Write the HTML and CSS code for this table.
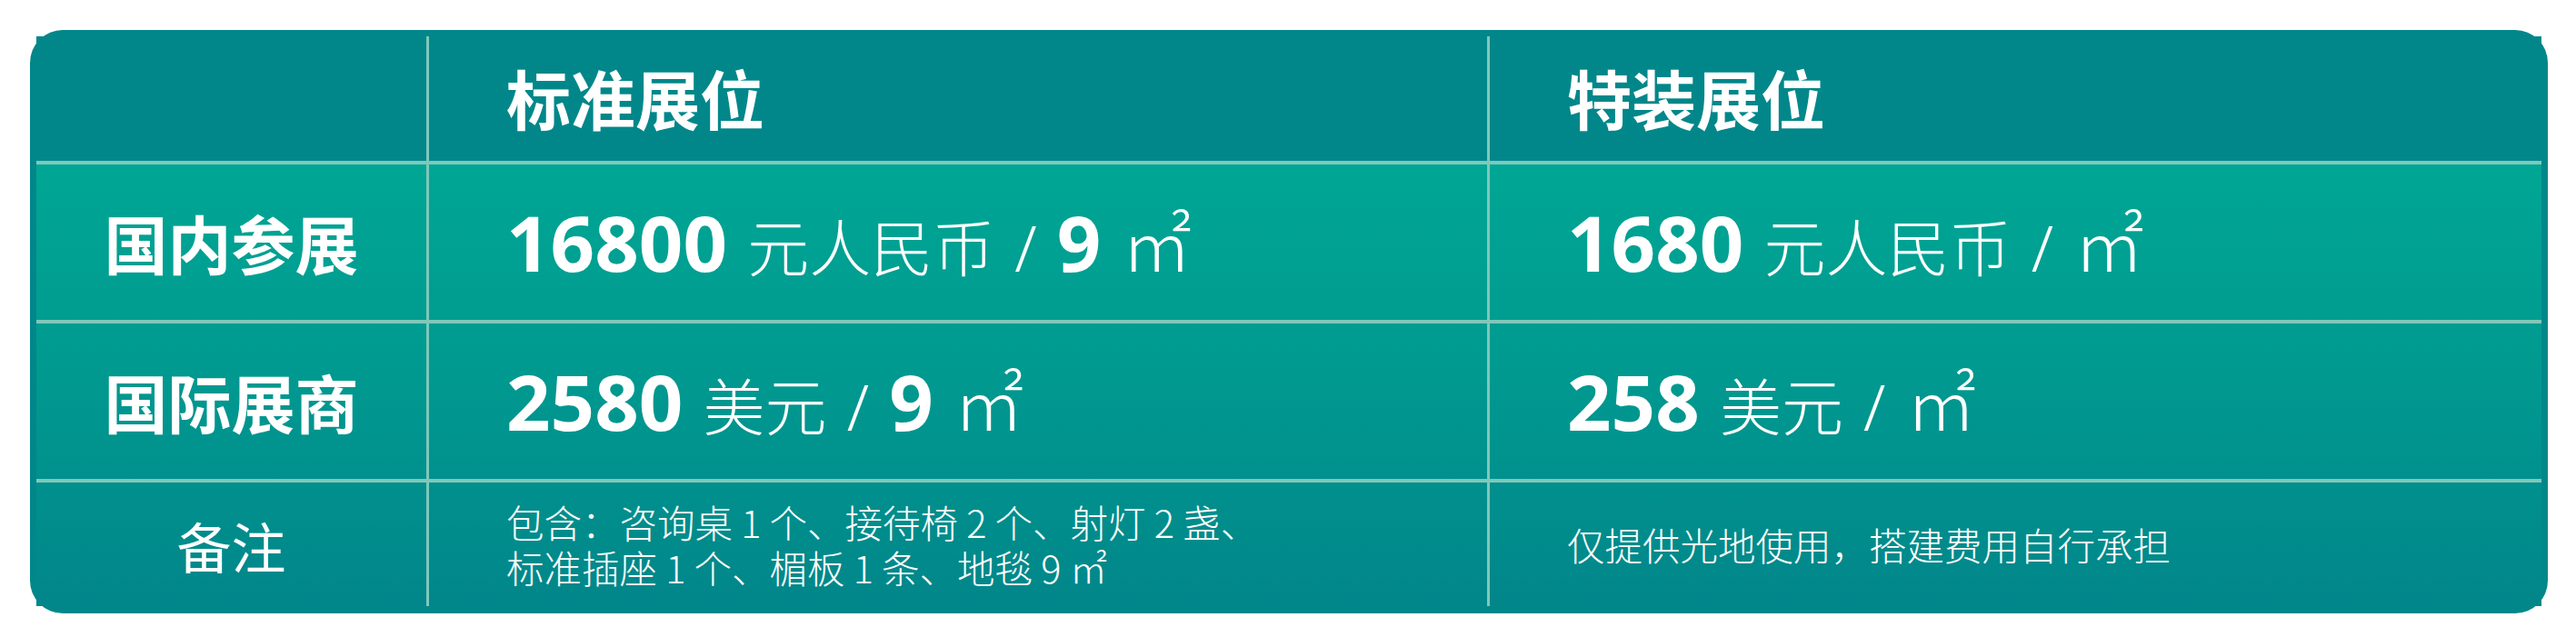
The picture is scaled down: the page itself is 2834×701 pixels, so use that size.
FILE: index.html
```html
<!DOCTYPE html>
<html lang="zh-CN">
<head>
<meta charset="utf-8">
<title>展位价格</title>
<link rel="stylesheet" href="styles.css">
</head>
<body>
<div class="card">
  <div class="table">
    <div class="cell head first"></div>
    <div class="cell head col">标准展位</div>
    <div class="cell head col">特装展位</div>

    <div class="cell label row">国内参展</div>
    <div class="cell price row col"><p class="val"><span class="num">16800</span> <span class="unit">元人民币</span> <span class="slash">/</span> <span class="num">9</span> <span class="sq">㎡</span></p></div>
    <div class="cell price row col"><p class="val"><span class="num">1680</span> <span class="unit">元人民币</span> <span class="slash">/</span> <span class="sq">㎡</span></p></div>

    <div class="cell label row">国际展商</div>
    <div class="cell price row col"><p class="val"><span class="num">2580</span> <span class="unit">美元</span> <span class="slash">/</span> <span class="num">9</span> <span class="sq">㎡</span></p></div>
    <div class="cell price row col"><p class="val"><span class="num">258</span> <span class="unit">美元</span> <span class="slash">/</span> <span class="sq">㎡</span></p></div>

    <div class="cell note-label row">备注</div>
    <div class="cell note row col"><p class="val">包含：咨询桌 1 个、接待椅 2 个、射灯 2 盏、<br>标准插座 1 个、楣板 1 条、地毯 9 ㎡</p></div>
    <div class="cell note row col"><p class="val">仅提供光地使用，搭建费用自行承担</p></div>
  </div>
</div>
</body>
</html>
```

FILE: styles.css
```css
html, body {
  margin: 0;
  padding: 0;
  background: #ffffff;
}

body {
  font-family: "Noto Sans", "Noto Sans CJK SC", sans-serif;
  color: #ffffff;
}

.card {
  box-sizing: border-box;
  margin: 33px 0 0 33px;
  width: 2770px;
  height: 642px;
  padding: 7px 7px 8px 7px;
  border-radius: 36px;
  background: #01878a;
}

.table {
  display: grid;
  grid-template-columns: 429px 1167px 1160px;
  grid-template-rows: 137px 175px 175px 140px;
  background: linear-gradient(to bottom, #01878a 0, #01878a 137px, #00a694 141px, #009a90 360px, #01868a 100%);
}

.cell {
  box-sizing: border-box;
  display: flex;
  align-items: center;
  white-space: nowrap;
}

.val {
  margin: 0;
}

.col {
  border-left: 3px solid #7fc8bb;
  padding-left: 85px;
}

.row {
  border-top: 4px solid #7fc8bb;
}

.head {
  font-family: "Noto Sans CJK SC", sans-serif;
  font-weight: 700;
  font-size: 71px;
  padding-bottom: 6px;
}

.label {
  justify-content: center;
  font-family: "Noto Sans CJK SC", sans-serif;
  font-weight: 700;
  font-size: 70px;
}

.note-label {
  justify-content: center;
  font-family: "Noto Sans CJK SC", sans-serif;
  font-weight: 400;
  font-size: 60px;
}

.price {
  font-size: 85px;
  line-height: 1.1;
}

.num {
  font-family: "Noto Sans", sans-serif;
  font-weight: 700;
}

.unit {
  font-family: "Noto Sans CJK SC", sans-serif;
  font-weight: 300;
  font-size: 68px;
}

.sq {
  font-family: "Noto Sans CJK SC", sans-serif;
  font-weight: 300;
  font-size: 78px;
}

.slash {
  font-family: "Noto Sans", sans-serif;
  font-weight: 300;
  font-size: 70px;
}

.note {
  font-family: "Noto Sans CJK SC", sans-serif;
  font-weight: 300;
  font-size: 41.5px;
  line-height: 50px;
}
```
